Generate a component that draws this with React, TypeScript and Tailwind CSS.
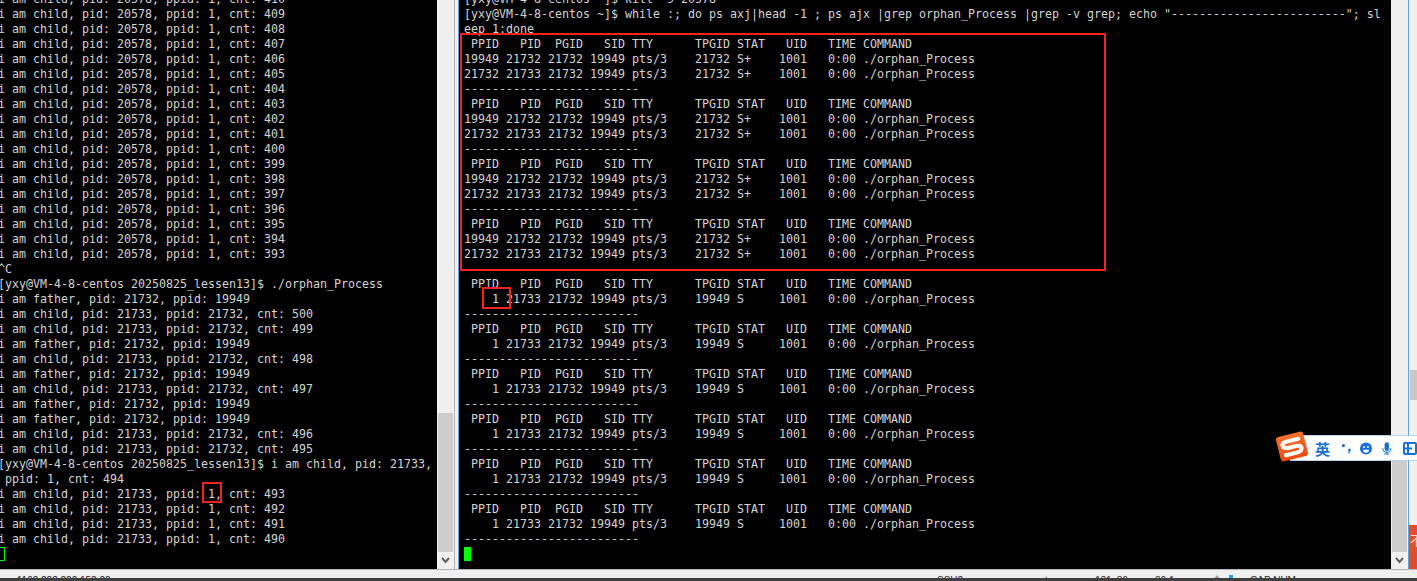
const PS_H = " PPID   PID  PGID   SID TTY      TPGID STAT   UID   TIME COMMAND";
const DASH = "-------------------------";
const fgRun = [
  PS_H,
  "19949 21732 21732 19949 pts/3    21732 S+    1001   0:00 ./orphan_Process",
  "21732 21733 21732 19949 pts/3    21732 S+    1001   0:00 ./orphan_Process",
  DASH,
];
const bgRun = [PS_H, "    1 21733 21732 19949 pts/3    19949 S     1001   0:00 ./orphan_Process", DASH];

const rightLines = [
  "[yxy@VM-4-8-centos ~]$ kill -9 20578",
  '[yxy@VM-4-8-centos ~]$ while :; do ps axj|head -1 ; ps ajx |grep orphan_Process |grep -v grep; echo "-------------------------"; sl',
  "eep 1:done",
  ...fgRun, ...fgRun, ...fgRun, ...fgRun,
  ...bgRun, ...bgRun, ...bgRun, ...bgRun, ...bgRun, ...bgRun,
];

const leftLines = [
  ...Array.from({ length: 18 }, (_, i) => `i am child, pid: 20578, ppid: 1, cnt: ${410 - i}`),
  "^C",
  "[yxy@VM-4-8-centos 20250825_lessen13]$ ./orphan_Process",
  "i am father, pid: 21732, ppid: 19949",
  "i am child, pid: 21733, ppid: 21732, cnt: 500",
  "i am child, pid: 21733, ppid: 21732, cnt: 499",
  "i am father, pid: 21732, ppid: 19949",
  "i am child, pid: 21733, ppid: 21732, cnt: 498",
  "i am father, pid: 21732, ppid: 19949",
  "i am child, pid: 21733, ppid: 21732, cnt: 497",
  "i am father, pid: 21732, ppid: 19949",
  "i am father, pid: 21732, ppid: 19949",
  "i am child, pid: 21733, ppid: 21732, cnt: 496",
  "i am child, pid: 21733, ppid: 21732, cnt: 495",
  "[yxy@VM-4-8-centos 20250825_lessen13]$ i am child, pid: 21733,",
  " ppid: 1, cnt: 494",
  "i am child, pid: 21733, ppid: 1, cnt: 493",
  "i am child, pid: 21733, ppid: 1, cnt: 492",
  "i am child, pid: 21733, ppid: 1, cnt: 491",
  "i am child, pid: 21733, ppid: 1, cnt: 490",
];

function Term({ lines }: { lines: string[] }) {
  return (
    <div className="font-['DejaVu_Sans_Mono',monospace] text-[11.63px] leading-[15px] text-[#d4d4d4] whitespace-pre">
      {lines.map((l, i) => (
        <div key={i} className="h-[15px]">{l || " "}</div>
      ))}
    </div>
  );
}

function Scrollbar({ track }: { track: string }) {
  return (
    <div className="w-[17px] shrink-0 bg-[#f0f0f0] flex flex-col">
      <div className={track} />
      <div className="flex-1 bg-[#cdcdcd] mx-[1px]" />
      <div className="h-[17px] flex items-center justify-center">
        <svg width="9" height="7" viewBox="0 0 9 7" fill="none" stroke="#606060" strokeWidth="2">
          <path d="M1 1l3.5 4L8 1" />
        </svg>
      </div>
    </div>
  );
}

export default function App() {
  return (
    <div className="w-[1417px] h-[581px] overflow-hidden flex flex-col bg-[#f0f0f0] relative font-['Liberation_Sans',sans-serif]">
      <div className="flex h-[569px]">
        {/* left terminal */}
        <div className="w-[437px] shrink-0 bg-black relative overflow-hidden">
          <div className="-mt-[8px] -ml-[2px]">
            <Term lines={leftLines} />
          </div>
          <div className="absolute -left-[2px] top-[547px] w-[7px] h-[14px] border border-[#00ff00]" />
          <div className="absolute left-[202px] top-[482px] w-[20px] h-[21px] border-2 border-[#f4241c]" />
        </div>
        <Scrollbar track="h-[413px]" />
        <div className="w-[1px] shrink-0 bg-[#b4b4b4]" />
        <div className="w-[3px] shrink-0 bg-[#f0f0f0]" />
        {/* right terminal */}
        <div className="w-[951px] shrink-0 flex border-x border-[#5aa5de]">
          <div className="flex-1 bg-black relative overflow-hidden pl-[5px] min-w-0">
            <div className="-mt-[8px]">
              <Term lines={rightLines} />
            </div>
            <div className="absolute left-[5px] top-[547px] w-[7px] h-[14px] bg-[#00ff00]" />
          </div>
          <Scrollbar track="h-[440px]" />
        </div>
        {/* window behind */}
        <div className="flex-1 flex flex-col bg-[#f0f0f0] overflow-hidden">
          <div className="h-[370px]" />
          <div className="h-[30px] bg-[#c8c8c8] ml-[1px]" />
          <div className="flex-1" />
          <div className="h-[44px] bg-[#e04e2c] text-[13px] leading-[16px] text-[#f5d5c8] pt-[7px] pl-[1px] font-['Noto_Sans_CJK_SC',sans-serif]">
            不
          </div>
        </div>
      </div>
      {/* status bar */}
      <div className="flex-1 flex flex-col">
        <div className="flex-1 bg-[#f0f0f0] relative overflow-hidden border-t border-[#b4b4b4]">
          <div className="absolute left-[458px] -top-[1px] w-[951px] h-[1px] bg-[#5aa5de]" />
          <div className="absolute inset-0 text-[10px] leading-[10px] text-[#222]">
            <span className="absolute left-[9px] top-[6px] whitespace-pre">↑ 1102.222.222.152:22</span>
            <span className="absolute left-[937px] top-[6px] whitespace-pre">SSH2</span>
            <span className="absolute left-[1040px] top-[6px] whitespace-pre">xterm</span>
            <span className="absolute left-[1095px] top-[6px] whitespace-pre">131x36</span>
            <span className="absolute left-[1155px] top-[6px] whitespace-pre">36,1</span>
            <span className="absolute left-[1250px] top-[6px] whitespace-pre">CAP NUM</span>
            <span className="absolute left-[1212px] top-[5px] w-0 h-0 border-x-[5px] border-x-transparent border-b-[6px] border-b-[#a0a0a0]" />
            <span className="absolute left-[1229px] top-[5px] w-[4px] h-[4px] bg-[#1ea7f0]" />
          </div>
        </div>
        <div className="h-[3px] bg-[#404040]" />
      </div>

      {/* red highlight box */}
      <div className="absolute left-[460px] top-[33px] w-[646px] h-[238px] border-2 border-[#f4241c]" />
      <div className="absolute left-[482px] top-[287px] w-[29px] h-[22px] border-2 border-[#f4241c]" />

      {/* Sogou input method bar */}
      <div className="absolute left-[1290px] top-[435px] w-[127px] h-[26px] bg-white border-y border-[#b8d2ec] flex items-center pl-[25px] text-[#1670d8]">
        <span className="w-[15px] text-[15px] font-bold leading-none font-['Noto_Sans_CJK_SC',sans-serif]">英</span>
        <svg className="ml-[11px]" width="13" height="14" viewBox="0 0 13 14" fill="#1670d8">
          <circle cx="3" cy="4" r="2" />
          <path d="M9 8h3v1.5c0 2-1 3.5-3 4.5l-.7-.8c1-.7 1.5-1.4 1.6-2.2H9z" />
        </svg>
        <svg className="ml-[9px]" width="15" height="15" viewBox="0 0 16 16">
          <circle cx="8" cy="8" r="8" fill="#1670d8" />
          <circle cx="5.5" cy="6" r="1.3" fill="#fff" />
          <circle cx="10.5" cy="6" r="1.3" fill="#fff" />
          <path d="M4 9.5h8a4 4 0 0 1-8 0z" fill="#fff" />
        </svg>
        <svg className="ml-[10px]" width="12" height="17" viewBox="0 0 13 17" fill="none">
          <rect x="3.5" y="0" width="6" height="12" rx="3" fill="#1670d8" />
          <path d="M1 8a5.5 5.5 0 0 0 11 0M6.5 13.5v2.5M3 16h7" stroke="#1670d8" strokeWidth="1.5" />
        </svg>
        <svg className="ml-[11px] shrink-0" width="14" height="13" viewBox="0 0 14 13" fill="none" stroke="#1670d8" strokeWidth="2">
          <rect x="1" y="1" width="12" height="11" rx="1" />
          <path d="M5 1v11M1 6.5h8" />
        </svg>
      </div>
      <div className="absolute left-[1278px] top-[434px] w-[28px] h-[25px] rounded-[3px] -rotate-[14deg] bg-gradient-to-b from-[#f9702a] to-[#ee4a10] flex items-center justify-center">
        <svg width="24" height="20" viewBox="0 0 24 20" fill="none" stroke="#fff" strokeWidth="4" strokeLinecap="round">
          <path d="M20 3.5H8Q3 3.5 3 6.5T8 10H16Q21 10 21 13T16 16.5H4" />
        </svg>
      </div>
    </div>
  );
}
